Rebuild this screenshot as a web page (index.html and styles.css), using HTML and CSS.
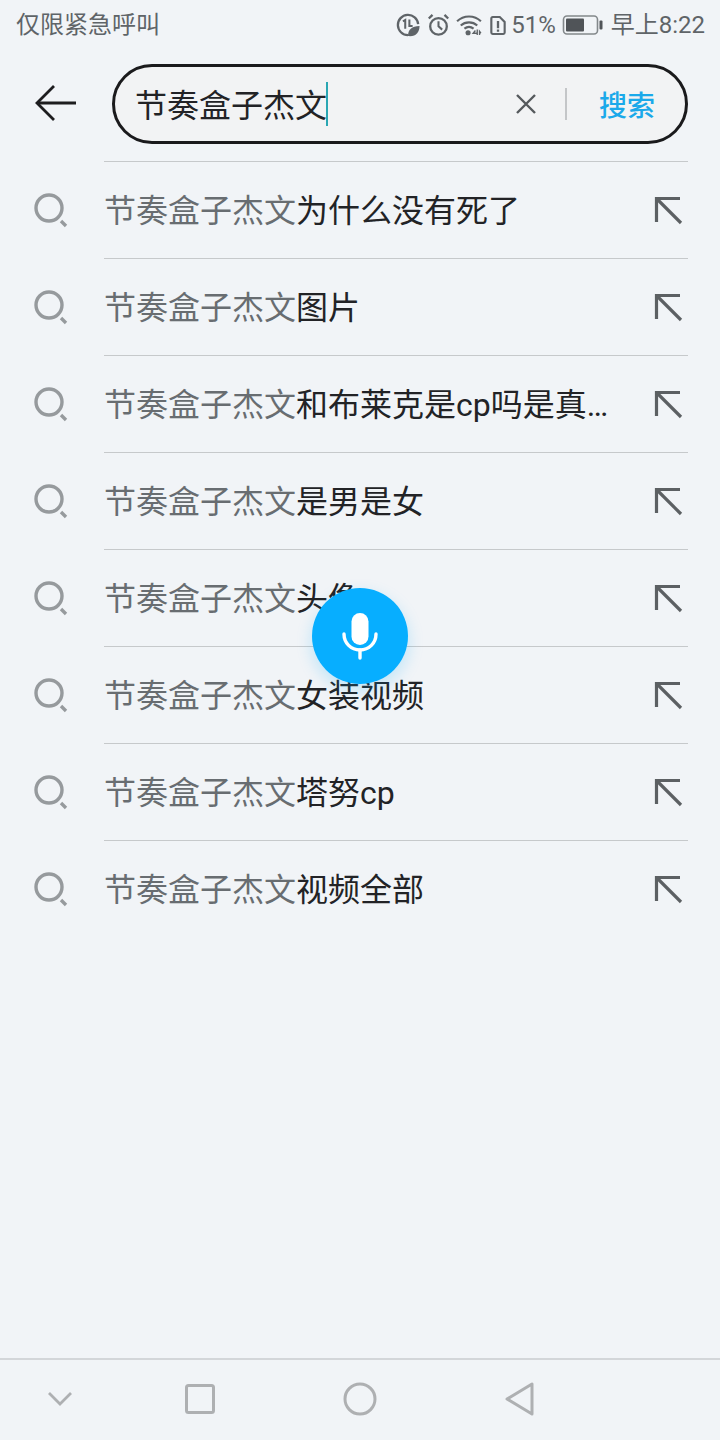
FILE: index.html
```html
<!DOCTYPE html>
<html lang="zh">
<head>
<meta charset="utf-8">
<title>搜索</title>
<link rel="stylesheet" href="styles.css">
</head>
<body>
<div class="page">
  <header class="status">
    <span class="status-left">仅限紧急呼叫</span>
    <div class="status-right">
      <svg class="ic-data" width="24" height="24" viewBox="0 0 26 26" fill="none" stroke="#5f6468" stroke-width="2.500"><path d="M13 24A11 11 0 1 1 24 12"/><path d="M7.500 9l2.500-1.500V17" stroke-width="2.200"/><path d="M14.500 7v7h3.500" stroke-width="2.200"/><path d="M13 25c0-7 4-11 12.500-11 0 7-4 12-12.500 11z" fill="#5f6468" stroke="none"/></svg>
      <svg class="ic-alarm" width="23" height="24" viewBox="0 0 24 26" fill="none" stroke="#5f6468" stroke-width="2.500"><circle cx="12" cy="14.500" r="9"/><path d="M12 9v5.500l4 3.500" stroke-width="2.200"/><path d="M1.500 6l4-4M22.500 6l-4-4"/></svg>
      <svg class="ic-wifi" width="26" height="22" viewBox="0 0 28 24" fill="none" stroke="#5f6468" stroke-width="2.300"><path d="M1 8c7-7 19-7 26 0"/><path d="M5 12.500c5-4.500 13-4.500 18 0"/><path d="M9 16c3-2.400 7-2.400 10 0"/><circle cx="13" cy="20.500" r="2.800" fill="#5f6468" stroke="none"/><path d="M21 18l-2.500 3h4M23 17v6M27 21l-1.500-2v4" stroke-width="1.500"/></svg>
      <svg class="ic-sim" width="16" height="21" viewBox="0 0 18 22" fill="none" stroke="#5f6468" stroke-width="2.400"><path d="M3 1.500h8l5.500 5.500v12a1.500 1.500 0 0 1-1.500 1.500H3A1.500 1.500 0 0 1 1.500 19V3A1.500 1.500 0 0 1 3 1.500z"/><path d="M9 6v8M9 15.500v2.500" stroke-width="2.600"/></svg>
      <span class="pct">51%</span>
      <svg class="ic-batt" width="41" height="22" viewBox="0 0 40 22"><rect x="1" y="2" width="34" height="18" rx="3.500" fill="none" stroke="#83888b" stroke-width="1.600"/><rect x="3.500" y="4.500" width="18" height="13" rx="1" fill="#505458"/><rect x="37" y="6.500" width="3" height="9" rx="1" fill="#505458"/></svg>
      <span class="time">早上8:22</span>
    </div>
  </header>

  <section class="search">
    <button class="back" type="button" aria-label="返回">
      <svg width="44" height="40" viewBox="0 0 44 40" fill="none" stroke="#1d1d1f" stroke-width="2.800"><path d="M42 20H4"/><path d="M20 3L3 20l17 17"/></svg>
    </button>
    <div class="pill">
      <div class="query"><span>节奏盒子杰文</span><i class="caret"></i></div>
      <svg class="clear" width="20" height="20" viewBox="0 0 20 20" fill="none" stroke="#55595c" stroke-width="2.400"><path d="M1 1l18 18M19 1L1 19"/></svg>
      <i class="sep"></i>
      <span class="go">搜索</span>
    </div>
  </section>

  <ul class="list">
    <li class="row">
      <div class="cell-icon"><svg width="34" height="36" viewBox="0 0 34 36" fill="none" stroke="#969a9d"><circle cx="15" cy="15" r="13" stroke-width="3.400"/><path d="M27 28l5 5" stroke-width="3.400"/></svg></div>
      <div class="cell-body"><p class="txt"><span class="pre">节奏盒子杰文</span>为什么没有死了</p><svg class="fill" width="30" height="30" viewBox="0 0 30 30" fill="none" stroke="#5c6063" stroke-width="3.200"><path d="M27 2.500H3.500V26"/><path d="M4 3l24 24"/></svg></div>
    </li>
    <li class="row">
      <div class="cell-icon"><svg width="34" height="36" viewBox="0 0 34 36" fill="none" stroke="#969a9d"><circle cx="15" cy="15" r="13" stroke-width="3.400"/><path d="M27 28l5 5" stroke-width="3.400"/></svg></div>
      <div class="cell-body"><p class="txt"><span class="pre">节奏盒子杰文</span>图片</p><svg class="fill" width="30" height="30" viewBox="0 0 30 30" fill="none" stroke="#5c6063" stroke-width="3.200"><path d="M27 2.500H3.500V26"/><path d="M4 3l24 24"/></svg></div>
    </li>
    <li class="row">
      <div class="cell-icon"><svg width="34" height="36" viewBox="0 0 34 36" fill="none" stroke="#969a9d"><circle cx="15" cy="15" r="13" stroke-width="3.400"/><path d="M27 28l5 5" stroke-width="3.400"/></svg></div>
      <div class="cell-body"><p class="txt"><span class="pre">节奏盒子杰文</span>和布莱克是cp吗是真…</p><svg class="fill" width="30" height="30" viewBox="0 0 30 30" fill="none" stroke="#5c6063" stroke-width="3.200"><path d="M27 2.500H3.500V26"/><path d="M4 3l24 24"/></svg></div>
    </li>
    <li class="row">
      <div class="cell-icon"><svg width="34" height="36" viewBox="0 0 34 36" fill="none" stroke="#969a9d"><circle cx="15" cy="15" r="13" stroke-width="3.400"/><path d="M27 28l5 5" stroke-width="3.400"/></svg></div>
      <div class="cell-body"><p class="txt"><span class="pre">节奏盒子杰文</span>是男是女</p><svg class="fill" width="30" height="30" viewBox="0 0 30 30" fill="none" stroke="#5c6063" stroke-width="3.200"><path d="M27 2.500H3.500V26"/><path d="M4 3l24 24"/></svg></div>
    </li>
    <li class="row">
      <div class="cell-icon"><svg width="34" height="36" viewBox="0 0 34 36" fill="none" stroke="#969a9d"><circle cx="15" cy="15" r="13" stroke-width="3.400"/><path d="M27 28l5 5" stroke-width="3.400"/></svg></div>
      <div class="cell-body"><p class="txt"><span class="pre">节奏盒子杰文</span>头像</p><svg class="fill" width="30" height="30" viewBox="0 0 30 30" fill="none" stroke="#5c6063" stroke-width="3.200"><path d="M27 2.500H3.500V26"/><path d="M4 3l24 24"/></svg></div>
    </li>
    <li class="row">
      <div class="cell-icon"><svg width="34" height="36" viewBox="0 0 34 36" fill="none" stroke="#969a9d"><circle cx="15" cy="15" r="13" stroke-width="3.400"/><path d="M27 28l5 5" stroke-width="3.400"/></svg></div>
      <div class="cell-body"><p class="txt"><span class="pre">节奏盒子杰文</span>女装视频</p><svg class="fill" width="30" height="30" viewBox="0 0 30 30" fill="none" stroke="#5c6063" stroke-width="3.200"><path d="M27 2.500H3.500V26"/><path d="M4 3l24 24"/></svg></div>
    </li>
    <li class="row">
      <div class="cell-icon"><svg width="34" height="36" viewBox="0 0 34 36" fill="none" stroke="#969a9d"><circle cx="15" cy="15" r="13" stroke-width="3.400"/><path d="M27 28l5 5" stroke-width="3.400"/></svg></div>
      <div class="cell-body"><p class="txt"><span class="pre">节奏盒子杰文</span>塔努cp</p><svg class="fill" width="30" height="30" viewBox="0 0 30 30" fill="none" stroke="#5c6063" stroke-width="3.200"><path d="M27 2.500H3.500V26"/><path d="M4 3l24 24"/></svg></div>
    </li>
    <li class="row">
      <div class="cell-icon"><svg width="34" height="36" viewBox="0 0 34 36" fill="none" stroke="#969a9d"><circle cx="15" cy="15" r="13" stroke-width="3.400"/><path d="M27 28l5 5" stroke-width="3.400"/></svg></div>
      <div class="cell-body"><p class="txt"><span class="pre">节奏盒子杰文</span>视频全部</p><svg class="fill" width="30" height="30" viewBox="0 0 30 30" fill="none" stroke="#5c6063" stroke-width="3.200"><path d="M27 2.500H3.500V26"/><path d="M4 3l24 24"/></svg></div>
    </li>
  </ul>

  <button class="mic" type="button" aria-label="语音">
    <svg width="36" height="48" viewBox="0 0 36 48" fill="none"><rect x="9.500" y="1" width="17" height="32" rx="8.500" fill="#fff"/><path d="M2 22c0 9 7 16 16 16s16-7 16-16" stroke="#fff" stroke-width="3.400" stroke-linecap="round"/><path d="M18 38v8" stroke="#fff" stroke-width="3.400" stroke-linecap="round"/></svg>
  </button>

  <nav class="nav">
    <svg width="28" height="16" viewBox="0 0 28 16" fill="none" stroke="#aeb0b2" stroke-width="2.800"><path d="M3 2l11 11L25 2"/></svg>
    <svg width="30" height="30" viewBox="0 0 30 30" fill="none" stroke="#aeb0b2" stroke-width="3"><rect x="1.500" y="1.500" width="27" height="27" rx="2"/></svg>
    <svg width="34" height="34" viewBox="0 0 34 34" fill="none" stroke="#aeb0b2" stroke-width="3"><circle cx="17" cy="17" r="15"/></svg>
    <svg width="30" height="34" viewBox="0 0 30 34" fill="none" stroke="#aeb0b2" stroke-width="3" stroke-linejoin="round"><path d="M27 2v30L2 17z"/></svg>
  </nav>
</div>
</body>
</html>
```
FILE: styles.css
```css
* { box-sizing: border-box; }
html, body { margin: 0; padding: 0; }
body {
  width: 720px;
  height: 1440px;
  background: #f1f4f7;
  font-family: Roboto, "Noto Sans CJK SC", sans-serif;
  overflow: hidden;
}
.page {
  position: relative;
  display: flex;
  flex-direction: column;
  height: 1440px;
}
.status {
  flex: none;
  display: flex;
  align-items: center;
  justify-content: space-between;
  height: 48px;
  padding: 2px 15px 0 16px;
  color: #5f6468;
  font-size: 24px;
  line-height: 28px;
}
.status-right { display: flex; align-items: center; }
.ic-data { margin-right: 7px; }
.ic-alarm { margin-right: 6px; }
.ic-wifi { margin-right: 8px; }
.ic-sim { margin-right: 5px; }
.pct { margin-right: 6px; }
.ic-batt { margin-right: 8px; }

.search {
  flex: none;
  display: flex;
  align-items: center;
  height: 80px;
  margin-top: 16px;
  padding: 0 32px 0 0;
}
.back {
  flex: none;
  display: flex;
  align-items: center;
  justify-content: flex-end;
  width: 112px;
  height: 80px;
  padding: 0 34px 2px 0;
  border: 0;
  background: none;
}
.pill {
  flex: 1;
  display: flex;
  align-items: center;
  height: 80px;
  padding: 0 30px 0 20px;
  background: #f2f3f4;
  border: 3px solid #1a1a1c;
  border-radius: 40px;
}
.query {
  flex: 1;
  display: flex;
  align-items: center;
  font-size: 32px;
  line-height: 44px;
  color: #222326;
}
.query span { display: block; padding-top: 4px; }
.caret {
  display: block;
  width: 2px;
  height: 44px;
  margin-left: -1px;
  background: #2aa7b3;
}
.clear { margin: 0 29px 0 0; }
.sep {
  display: block;
  width: 2px;
  height: 32px;
  background: #c4c6c8;
  margin-right: 32px;
}
.go { font-size: 28px; font-weight: 500; color: #1ba9ea; }

.list {
  flex: 1;
  margin: 17px 0 0;
  padding: 0 32px 0 0;
  list-style: none;
}
.row {
  display: flex;
  height: 97px;
}
.cell-icon {
  flex: none;
  width: 104px;
  padding: 32px 0 0 34px;
}
.cell-icon svg { display: block; }
.cell-body {
  flex: 1;
  min-width: 0;
  display: flex;
  align-items: center;
  justify-content: space-between;
  border-top: 1px solid #c6c9cb;
  padding-right: 5px;
}
.txt {
  margin: 0;
  padding-top: 2px;
  font-size: 32px;
  line-height: 44px;
  color: #222326;
  white-space: nowrap;
}
.pre { color: #686d71; }
.fill { flex: none; margin-top: 2px; }

.mic {
  position: absolute;
  left: 312px;
  top: 588px;
  display: flex;
  align-items: center;
  justify-content: center;
  width: 96px;
  height: 96px;
  padding: 0;
  border: 0;
  border-radius: 50%;
  background: #07aeff;
  box-shadow: 0 6px 16px rgba(7, 174, 255, 0.22);
}
.nav {
  flex: none;
  display: grid;
  grid-template-columns: 120px 160px 160px 160px;
  justify-items: center;
  align-items: center;
  height: 82px;
  padding-bottom: 2px;
  border-top: 2px solid #d3d6d9;
}
```
